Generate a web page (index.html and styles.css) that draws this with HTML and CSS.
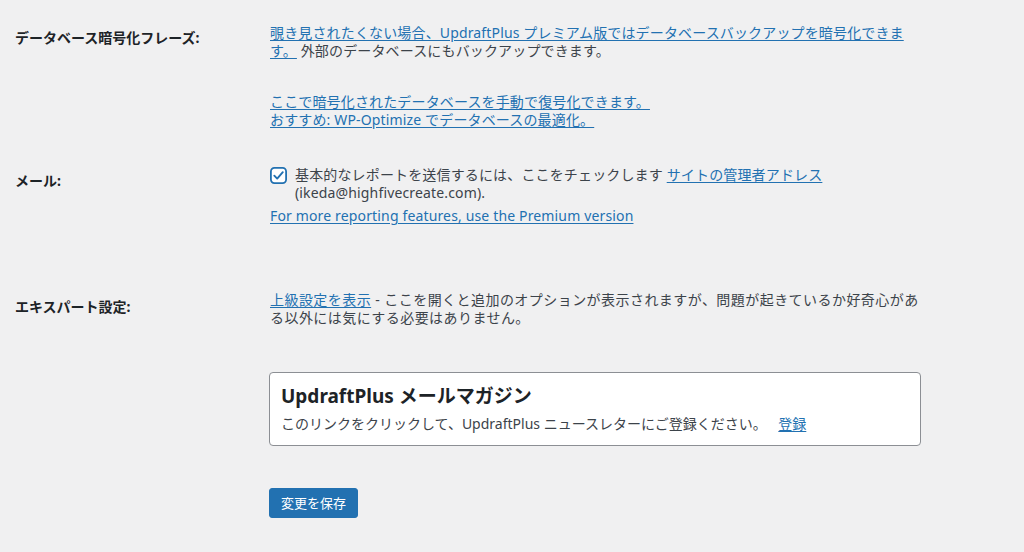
FILE: index.html
```html
<!DOCTYPE html>
<html lang="ja">
<head>
<meta charset="utf-8">
<title>UpdraftPlus 設定</title>
<link rel="stylesheet" href="styles.css">
</head>
<body>
<div class="settings">
  <div class="row row-db">
    <div class="label">データベース暗号化フレーズ:</div>
    <div class="field">
      <p class="para"><a href="#">覗き見されたくない場合、UpdraftPlus プレミアム版ではデータベースバックアップを暗号化できます。</a> 外部のデータベースにもバックアップできます。</p>
      <p class="para para-gap"><a href="#">ここで暗号化されたデータベースを手動で復号化できます。</a><br><a href="#">おすすめ: WP-Optimize でデータベースの最適化。</a></p>
    </div>
  </div>
  <div class="row row-mail">
    <div class="label">メール:</div>
    <div class="field">
      <div class="check">
        <svg class="checkbox" width="17" height="17" viewBox="0 0 17 17" aria-hidden="true">
          <rect x="0.9" y="0.9" width="15.2" height="15.2" rx="3.5" fill="#fff" stroke="#2271b1" stroke-width="1.8"/>
          <path d="M4.3 8.7 L7.2 11.6 L12.8 5.2" fill="none" stroke="#2271b1" stroke-width="1.9" stroke-linecap="round" stroke-linejoin="round"/>
        </svg>
        <p class="check-text">基本的なレポートを送信するには、ここをチェックします <a href="#">サイトの管理者アドレス</a> (ikeda@highfivecreate.com).</p>
      </div>
      <p class="para"><a href="#">For more reporting features, use the Premium version</a></p>
    </div>
  </div>
  <div class="row row-expert">
    <div class="label">エキスパート設定:</div>
    <div class="field">
      <p class="para para-wide"><a href="#">上級設定を表示</a> - ここを開くと追加のオプションが表示されますが、問題が起きているか好奇心がある以外には気にする必要はありません。</p>
      <div class="newsletter">
        <h2 class="nl-title">UpdraftPlus メールマガジン</h2>
        <p class="nl-text">このリンクをクリックして、UpdraftPlus ニュースレターにご登録ください。 <a href="#" class="nl-link">登録</a></p>
      </div>
      <button class="save" type="button">変更を保存</button>
    </div>
  </div>
</div>
</body>
</html>
```
FILE: styles.css
```css
html, body {
  margin: 0;
  padding: 0;
  background: #f0f0f1;
}
body {
  font-family: "Noto Sans", "Noto Sans CJK JP", sans-serif;
  font-size: 14px;
  line-height: 18px;
  letter-spacing: 0.15px;
  color: #3c434a;
  width: 1024px;
  height: 552px;
  overflow: hidden;
}
a {
  color: #2271b1;
  text-decoration: underline;
  text-underline-offset: 2px;
}
.settings {
  padding-left: 15px;
}
.row {
  display: grid;
  grid-template-columns: 255px 652px;
}
.label {
  font-weight: 700;
  color: #1d2327;
  letter-spacing: 0;
}
.row-db .label { padding-top: 29px; }
.row-db .field { padding-top: 24px; }
.row-mail { padding-top: 37px; }
.row-mail .label { padding-top: 6px; }
.row-expert { padding-top: 66px; }
.row-expert .label { padding-top: 7px; }
.para {
  margin: 0;
}
.para-gap {
  margin-top: 33px;
}
.para-wide {
  letter-spacing: 0.45px;
}
.check {
  display: flex;
  align-items: flex-start;
  margin-bottom: 5px;
}
.checkbox {
  flex: 0 0 17px;
  margin-top: 1px;
  margin-right: 8px;
}
.check-text {
  flex: 1 1 auto;
  margin: 0;
}
.newsletter {
  margin-top: 45px;
  margin-left: -1px;
  width: 652px;
  height: 74px;
  box-sizing: border-box;
  background: #fff;
  border: 1px solid #8c8f94;
  border-radius: 4px;
  padding: 11px 11px 10px;
  letter-spacing: 0;
}
.nl-title {
  margin: 0 0 6px;
  font-size: 19px;
  line-height: 24px;
  font-weight: 700;
  color: #1d2327;
}
.nl-text {
  margin: 0;
  line-height: 20px;
  color: #3c434a;
}
.nl-link {
  margin-left: 8px;
}
.save {
  margin-top: 42px;
  margin-left: -1px;
  display: block;
  height: 30px;
  padding: 0 11px;
  background: #2271b1;
  color: #fff;
  border: 1px solid #2271b1;
  border-radius: 3px;
  font-family: "Noto Sans", "Noto Sans CJK JP", sans-serif;
  font-size: 13px;
  line-height: 28px;
  letter-spacing: 0;
  cursor: pointer;
}
```
